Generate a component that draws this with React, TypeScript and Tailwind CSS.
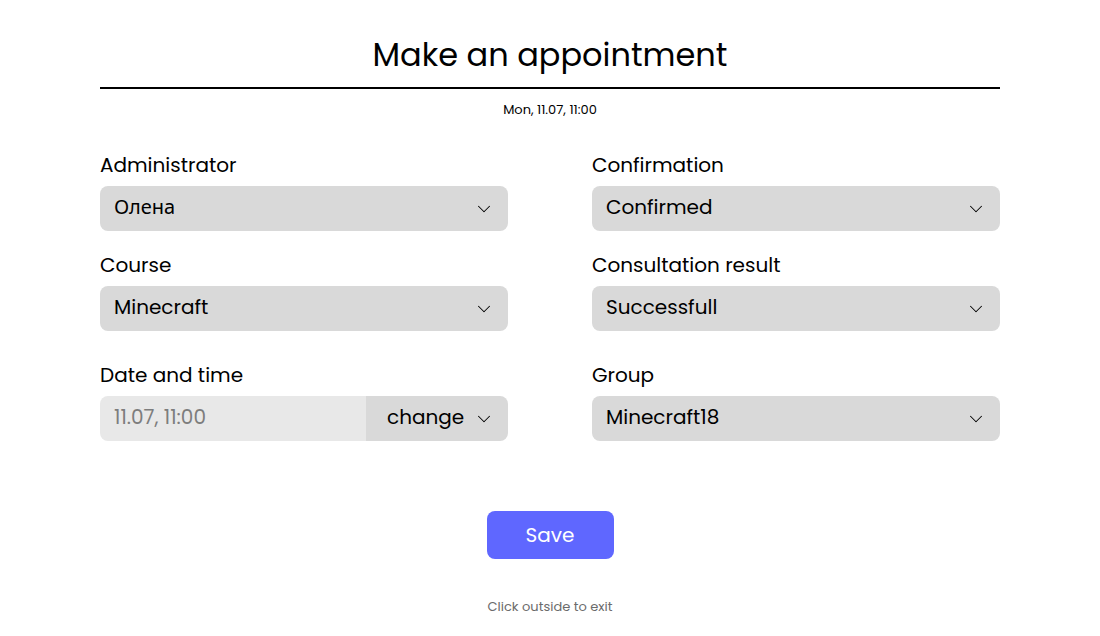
import { ChevronDown } from "lucide-react";

const Select = ({ value }: { value: string }) => {
    return (
        <div className="flex items-center justify-between h-[45px] rounded-lg bg-[#d9d9d9] pl-[14px] pr-[13px]">
            <span className="text-[20px] text-black pb-[4px]">{value}</span>
            <ChevronDown className="w-[22px] h-[22px] text-black" strokeWidth={1.1} />
        </div>
    );
};

const Field = ({ label, children }: { label: string; children: React.ReactNode }) => {
    return (
        <div className="flex flex-col">
            <p className="text-[20px] text-black leading-[28px] mb-[7px]">{label}</p>
            {children}
        </div>
    );
};

const App = () => {
    return (
        <div className="w-full min-h-screen bg-white font-['Poppins','Noto_Sans',sans-serif]">
            <div className="w-[900px] mx-auto flex flex-col pt-[35px]">
                <h1 className="text-center text-[32px] leading-[40px] text-black">Make an appointment</h1>
                <div className="h-[2px] bg-black mt-[12px]" />
                <p className="text-center text-[13px] text-black mt-[13px] leading-[16px]">Mon, 11.07, 11:00</p>

                <div className="grid grid-cols-2 gap-x-[84px] mt-[33px]">
                    <div className="flex flex-col gap-[20px]">
                        <Field label="Administrator">
                            <Select value="Олена" />
                        </Field>
                        <Field label="Course">
                            <Select value="Minecraft" />
                        </Field>
                        <div className="mt-[10px]">
                            <Field label="Date and time">
                                <div className="flex h-[45px] rounded-lg overflow-hidden">
                                    <div className="flex-1 flex items-center bg-[#e8e8e8] pl-[14px]">
                                        <span className="text-[20px] text-[#7d7d7d] pb-[4px]">11.07, 11:00</span>
                                    </div>
                                    <div className="w-[142px] flex items-center justify-between bg-[#d9d9d9] pl-[21px] pr-[13px]">
                                        <span className="text-[20px] text-black pb-[4px]">change</span>
                                        <ChevronDown className="w-[22px] h-[22px] text-black" strokeWidth={1.1} />
                                    </div>
                                </div>
                            </Field>
                        </div>
                    </div>
                    <div className="flex flex-col gap-[20px]">
                        <Field label="Confirmation">
                            <Select value="Confirmed" />
                        </Field>
                        <Field label="Consultation result">
                            <Select value="Successfull" />
                        </Field>
                        <div className="mt-[10px]">
                            <Field label="Group">
                                <Select value="Minecraft18" />
                            </Field>
                        </div>
                    </div>
                </div>

                <div className="flex justify-center mt-[70px]">
                    <button className="w-[127px] h-[48px] rounded-lg bg-[#5f67ff] text-white text-[20px]">Save</button>
                </div>
                <p className="text-center text-[13px] text-[#6b6b6b] mt-[38px]">Click outside to exit</p>
            </div>
        </div>
    );
};

export default App;
